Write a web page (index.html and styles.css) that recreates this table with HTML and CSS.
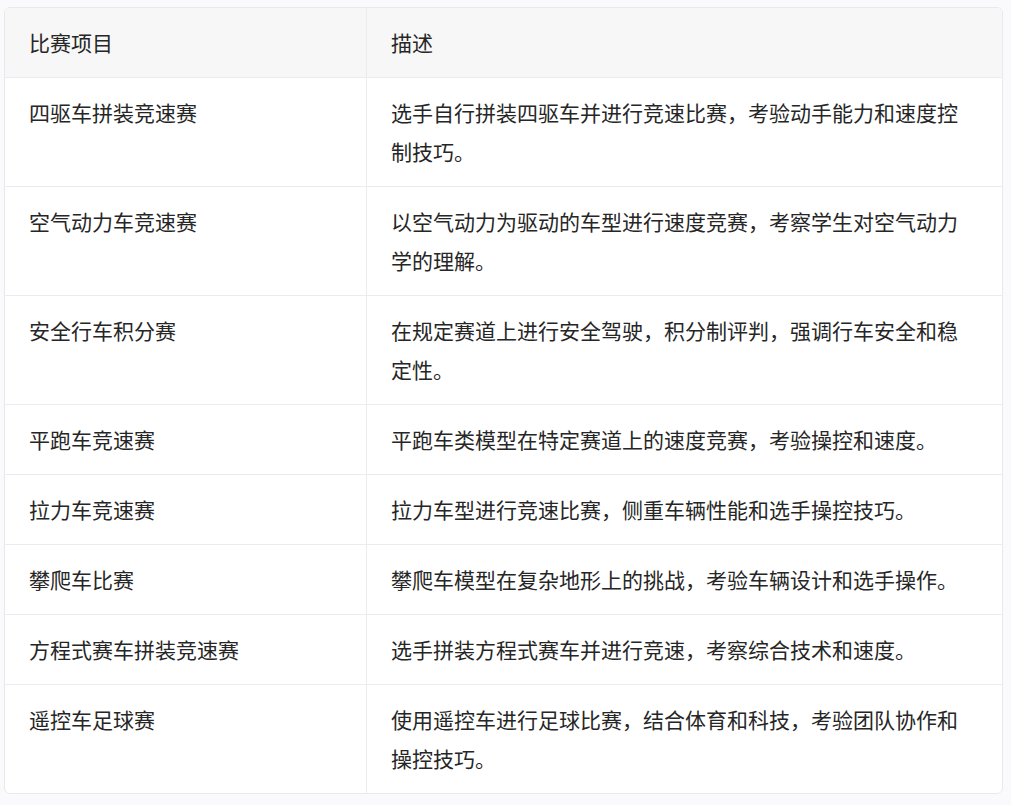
FILE: index.html
```html
<!DOCTYPE html>
<html lang="zh">
<head>
<meta charset="utf-8">
<link rel="stylesheet" href="styles.css">
</head>
<body>
<div class="table-wrap">
<table class="tbl">
<thead>
<tr><th class="c1">比赛项目</th><th>描述</th></tr>
</thead>
<tbody>
<tr><td class="c1">四驱车拼装竞速赛</td><td>选手自行拼装四驱车并进行竞速比赛，考验动手能力和速度控制技巧。</td></tr>
<tr><td class="c1">空气动力车竞速赛</td><td>以空气动力为驱动的车型进行速度竞赛，考察学生对空气动力学的理解。</td></tr>
<tr><td class="c1">安全行车积分赛</td><td>在规定赛道上进行安全驾驶，积分制评判，强调行车安全和稳定性。</td></tr>
<tr><td class="c1">平跑车竞速赛</td><td>平跑车类模型在特定赛道上的速度竞赛，考验操控和速度。</td></tr>
<tr><td class="c1">拉力车竞速赛</td><td>拉力车型进行竞速比赛，侧重车辆性能和选手操控技巧。</td></tr>
<tr><td class="c1">攀爬车比赛</td><td>攀爬车模型在复杂地形上的挑战，考验车辆设计和选手操作。</td></tr>
<tr><td class="c1">方程式赛车拼装竞速赛</td><td>选手拼装方程式赛车并进行竞速，考察综合技术和速度。</td></tr>
<tr><td class="c1">遥控车足球赛</td><td>使用遥控车进行足球比赛，结合体育和科技，考验团队协作和操控技巧。</td></tr>
</tbody>
</table>
</div>
</body>
</html>
```

FILE: styles.css
```css
html, body {
  background: #fafafc;
}
body {
  margin: 7px 8px 0 4px;
  font-family: "Noto Sans CJK SC", "Noto Sans", sans-serif;
  color: #262626;
}
.table-wrap {
  border: 1px solid #e9e9ec;
  border-radius: 6px;
  overflow: hidden;
  background: #ffffff;
}
.tbl {
  width: 100%;
  border-collapse: separate;
  border-spacing: 0;
  table-layout: fixed;
  font-size: 21px;
  line-height: 39px;
}
.tbl th, .tbl td {
  padding: 15px 24px;
  text-align: left;
  vertical-align: top;
  font-weight: 400;
  border-bottom: 1px solid #ececee;
}
.tbl tbody tr:last-child td {
  border-bottom: none;
}
.tbl .c1 {
  width: 313px;
  border-right: 1px solid #ececee;
}
.tbl thead th {
  background: #f7f7f7;
}
```
